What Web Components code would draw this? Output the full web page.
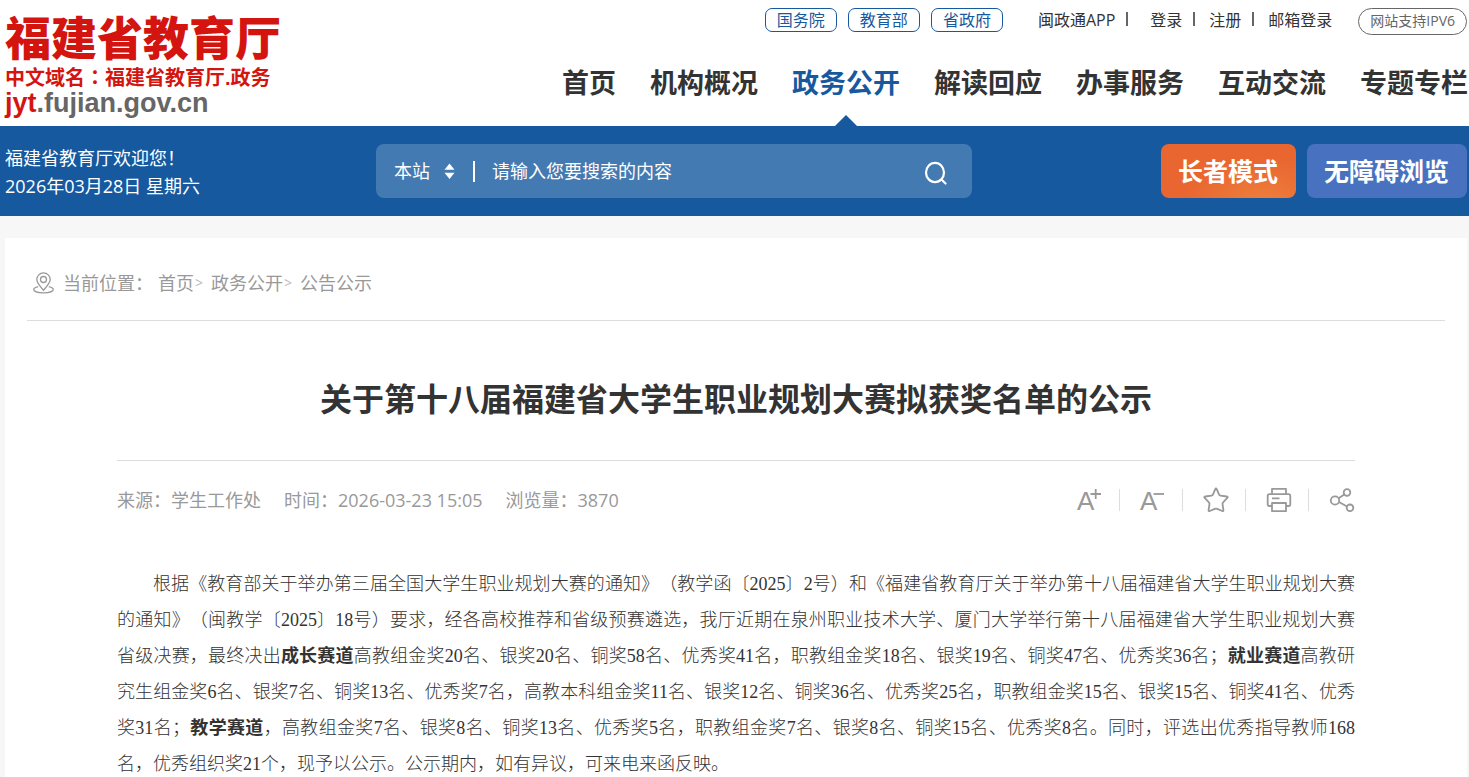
<!DOCTYPE html>
<html lang="zh-CN">
<head>
<meta charset="utf-8">
<meta name="viewport" content="width=device-width, initial-scale=1">
<title>关于第十八届福建省大学生职业规划大赛拟获奖名单的公示</title>
<style>
  :root {
    --color-brand: #16599f;
    --color-text: #333;
    --color-muted: #999;
    --color-line: #ddd;
    --font-ui: "Open Sans", "Noto Sans CJK SC", sans-serif;
    --font-article: "Liberation Serif", "Noto Sans CJK SC", serif;
  }
  body {
    margin: 0;
    background: #f7f7f7;
    color: var(--color-text);
    font-family: var(--font-ui);
    text-spacing-trim: space-all;
  }
</style>
</head>
<body>
<site-page></site-page>

<script>
function define(name, html) {
  const template = document.createElement('template')
  template.innerHTML = html

  customElements.define(name, class extends HTMLElement {
    constructor() {
      super()
      this.attachShadow({ mode: 'open' })
      this.shadowRoot.append(template.content.cloneNode(true))
    }
  })
}

define('site-logo', `
 <style>
  :host { display: block; white-space: nowrap; font-family: "Liberation Sans", "Noto Sans CJK SC", sans-serif; }
  a     { display: block; color: #d4150f; text-decoration: none; font-weight: 700; }
  span  { display: block; }
  .name   { font-size: 46px; line-height: 50px; font-weight: 900; }
  .domain { font-size: 20px; line-height: 26px; }
  .host   { font-size: 27px; line-height: 24px; color: #666; }
  b       { color: #d4150f; }
  i       { font-family: "Noto Sans CJK TC", sans-serif; font-style: normal; }
 </style>
 <a href="#">
  <span class="name">福建省教育厅</span>
  <span class="domain">中文域名<i lang="zh-TW">：</i>福建省教育厅.政务</span>
  <span class="host"><b>jyt</b>.fujian.gov.cn</span>
 </a>
`)

define('top-links', `
 <style>
  :host { display: flex; align-items: flex-start; justify-content: flex-end; font-size: 16px; line-height: 22px; white-space: nowrap; }
  a     { color: inherit; text-decoration: none; }
  .org  { display: flex; gap: 11px; margin-right: 35px; }
  .org a {
    padding: 0 11px;
    border: 1px solid var(--color-brand);
    border-radius: 7px;
    color: var(--color-brand);
  }
  .user { display: flex; align-items: center; line-height: 24px; }
  .user a + a::before {
    content: "";
    display: inline-block;
    width: 2px;
    height: 14px;
    margin: 0 14px 0 11px;
    background: #666;
  }
  .user a:nth-child(2)::before { margin-right: 22px; }
  .ipv6 {
    margin-left: 26px;
    padding: 0 11px 2px;
    border: 1px solid #666;
    border-radius: 14px;
    color: #666;
    font-size: 14px;
    line-height: 23px;
  }
 </style>
 <div class="org"><a href="#">国务院</a><a href="#">教育部</a><a href="#">省政府</a></div>
 <div class="user"><a href="#">闽政通APP</a><a href="#">登录</a><a href="#">注册</a><a href="#">邮箱登录</a></div>
 <a class="ipv6" href="#">网站支持IPV6</a>
`)

define('nav-item', `
 <style>
  :host { display: block; position: relative; }
  a     { display: block; color: inherit; text-decoration: none; }
  :host([active]) { color: var(--color-brand); }
  :host([active])::after {
    content: "";
    position: absolute;
    bottom: 0;
    left: calc(50% - 11px);
    border: solid transparent;
    border-width: 0 11px 11px;
    border-bottom-color: var(--color-brand);
  }
 </style>
 <a href="#"><slot></slot></a>
`)

define('main-nav', `
 <style>
  :host { display: block; }
  nav   { display: flex; justify-content: flex-end; gap: 34px; font-size: 27px; font-weight: 700; line-height: 40px; white-space: nowrap; }
  nav-item { padding: 28px 0 23px; }
 </style>
 <nav>
  <nav-item>首页</nav-item>
  <nav-item>机构概况</nav-item>
  <nav-item active>政务公开</nav-item>
  <nav-item>解读回应</nav-item>
  <nav-item>办事服务</nav-item>
  <nav-item>互动交流</nav-item>
  <nav-item>专题专栏</nav-item>
 </nav>
`)

define('site-header', `
 <style>
  :host     { display: flex; justify-content: space-between; background: #fff; padding: 0 2px 0 5px; }
  site-logo { padding-top: 14px; }
  .menus    { display: flex; flex-direction: column; justify-content: flex-end; padding-top: 8px; }
  main-nav  { margin-right: -1px; }
 </style>
 <site-logo></site-logo>
 <div class="menus">
  <top-links></top-links>
  <main-nav></main-nav>
 </div>
`)

define('search-box', `
 <style>
  :host { display: block; }
  form {
    display: flex;
    align-items: center;
    height: 54px;
    padding: 0 18px;
    border-radius: 8px;
    background: rgba(255, 255, 255, .2);
  }
  select, input, button {
    appearance: none;
    margin: 0;
    padding: 0;
    border: 0;
    outline: 0;
    background: none;
    color: #fff;
    font: inherit;
    line-height: 28px;
  }
  select { width: 50px; }
  option { color: var(--color-text); }
  .line  { width: 2px; height: 21px; margin: 0 17px 0 18px; background: #fff; }
  input  { flex: 1; min-width: 0; }
  input::placeholder { color: #fff; opacity: 1; }
  button { display: flex; padding: 8px 6px 4px; cursor: pointer; }
 </style>
 <form onsubmit="return false">
  <select aria-label="搜索范围"><option>本站</option></select>
  <svg width="11" height="16" viewBox="0 0 11 16" fill="#fff"><path d="M5.500 0.500 10.500 6.800H.5zM5.500 16 10.500 9.700H.5z"/></svg>
  <span class="line"></span>
  <input type="text" aria-label="搜索" placeholder="请输入您要搜索的内容">
  <button aria-label="搜索">
   <svg width="24" height="24" viewBox="0 0 24 24" fill="none" stroke="#fff" stroke-width="2.200" stroke-linecap="round"><ellipse cx="11" cy="11.500" rx="9" ry="9.700"/><path d="m17.500 18.500 4 4"/></svg>
  </button>
 </form>
`)

define('mode-button', `
 <style>
  :host { display: block; }
  button {
    height: 54px;
    padding: 0 18px 0 17px;
    border: 0;
    border-radius: 8px;
    background: var(--mode-bg, #4872c0);
    color: #fff;
    font: 700 25px/54px var(--font-ui);
    white-space: nowrap;
    cursor: pointer;
  }
 </style>
 <button><slot></slot></button>
`)

define('site-banner', `
 <style>
  :host {
    display: grid;
    grid-template-columns: 371px minmax(0, 596px) 1fr;
    align-items: center;
    height: 90px;
    padding: 0 2px 0 5px;
    background: var(--color-brand);
    color: #fff;
    font-size: 18px;
    line-height: 28px;
  }
  p        { margin: 0; }
  .welcome { padding-top: 2px; }
  .modes   { display: flex; justify-content: flex-end; gap: 11px; }
  .elder   { --mode-bg: radial-gradient(ellipse at 75% 110%, #ed7f3c 0%, #e96631 55%); }
 </style>
 <div class="welcome">
  <p>福建省教育厅欢迎您！</p>
  <p>2026年03月28日 星期六</p>
 </div>
 <search-box></search-box>
 <div class="modes">
  <mode-button class="elder">长者模式</mode-button>
  <mode-button>无障碍浏览</mode-button>
 </div>
`)

define('bread-crumb', `
 <style>
  :host {
    display: block;
    padding: 30px 6px 22px;
    border-bottom: 1px solid var(--color-line);
    color: var(--color-muted);
    font-size: 18px;
    line-height: 30px;
  }
  nav   { display: flex; align-items: center; }
  svg   { margin-right: 9px; }
  a     { color: inherit; text-decoration: none; }
  .home { margin-left: 5px; }
  i     { width: 16px; padding-left: 1px; font-style: normal; font-size: 14px; color: #bbb; }
 </style>
 <nav>
  <svg width="21" height="22" viewBox="0 0 21 22" fill="none" stroke="#999" stroke-width="1.300"><path d="M10.500 18.300C7 14.300 3.800 11 3.800 7.600a6.700 6.700 0 0 1 13.400 0c0 3.400-3.200 6.700-6.700 10.700z"/><circle cx="10.500" cy="7.500" r="3"/><path d="M5.200 14.700C2.600 15.300.8 16.300.8 17.500c0 1.900 4.200 3.400 9.700 3.400s9.700-1.500 9.700-3.400c0-1.200-1.800-2.200-4.400-2.800"/></svg>
  <span>当前位置：</span>
  <a class="home" href="#">首页</a><i>&gt;</i>
  <a href="#">政务公开</a><i>&gt;</i>
  <a href="#">公告公示</a>
 </nav>
`)

define('article-tools', `
 <style>
  :host  { display: flex; align-items: center; }
  button {
    display: flex;
    width: 26px;
    height: 26px;
    padding: 0;
    border: 0;
    background: none;
    color: var(--color-muted);
    font: 26px/28px "Liberation Sans", sans-serif;
    cursor: pointer;
  }
  span { width: 1px; height: 22px; margin: 0 20px 0 16px; background: var(--color-line); }
  svg  { flex: none; fill: none; stroke: currentColor; stroke-width: 1.800; stroke-linejoin: round; }
  .sign { margin: 1px 0 0 -5px; }
 </style>
 <button aria-label="放大字号">A<svg class="sign" width="12" height="12"><path d="M1.500 6H12M6.700 1v10"/></svg></button>
 <span></span>
 <button aria-label="缩小字号">A<svg class="sign" width="12" height="12"><path d="M1.500 6H12"/></svg></button>
 <span></span>
 <button aria-label="收藏"><svg width="26" height="26" viewBox="0 0 26 26"><path d="M13 1.500Q13.400 1.500 13.700 2.200L16.100 7.600Q16.500 8.500 17.500 8.600L23.800 9.500Q25.300 9.800 24.300 10.900L20.100 15.300Q19.400 16 19.500 17L20.400 23Q20.500 24.500 19.200 24L14.200 21.900Q13 21.400 11.800 21.900L6.800 24Q5.500 24.500 5.600 23L6.500 17Q6.600 16 5.900 15.300L1.700 10.900Q.7 9.800 2.200 9.500L8.500 8.600Q9.500 8.500 9.900 7.600L12.300 2.200Q12.600 1.500 13 1.500z"/></svg></button>
 <span></span>
 <button aria-label="打印"><svg width="26" height="26" viewBox="0 0 26 26"><path d="M6 7V1.800h14V7M6 19H3.500Q1.700 19 1.700 17.200V9Q1.700 7.200 3.500 7.200h19Q24.300 7.200 24.300 9v8.200Q24.300 19 22.500 19H20M6 16h14v8.200H6zM6 11.300h7.500"/></svg></button>
 <span></span>
 <button aria-label="分享"><svg width="26" height="26" viewBox="0 0 26 26"><circle cx="6" cy="13.500" r="4.200"/><circle cx="18" cy="5.500" r="3.300"/><circle cx="21" cy="20.800" r="3.300"/><path d="m9.600 11.200 5.700-3.800M10 15l8 4.500"/></svg></button>
`)

define('article-meta', `
 <style>
  :host {
    display: flex;
    justify-content: space-between;
    align-items: center;
    padding: 26px 0;
    border-top: 1px solid var(--color-line);
    color: var(--color-muted);
    font-size: 18px;
    line-height: 26px;
  }
  div { display: flex; gap: 23px; white-space: nowrap; }
 </style>
 <div>
  <span>来源：学生工作处</span>
  <span>时间：2026-03-23 15:05</span>
  <span>浏览量：3870</span>
 </div>
 <article-tools></article-tools>
`)

define('notice-article', `
 <style>
  :host { display: block; margin: 0 90px; }
  h1 {
    margin: 0;
    padding: 53px 0 37px;
    font-size: 32px;
    font-weight: 700;
    line-height: 49px;
    text-align: center;
  }
  .body {
    padding: 27px 0;
    font-family: var(--font-article);
    font-size: 18px;
    font-weight: 300;
    line-height: 36px;
    text-align: justify;
  }
  ::slotted(p) { margin: 0; text-indent: 2em; }
 </style>
 <h1><slot name="title"></slot></h1>
 <article-meta></article-meta>
 <div class="body"><slot></slot></div>
`)

define('site-page', `
 <style>
  :host  { display: block; }
  main   { margin: 22px 2px 0 5px; padding: 0 22px; background: #fff; }
  strong { font-weight: 700; }
 </style>
 <site-header></site-header>
 <site-banner></site-banner>
 <main>
  <bread-crumb></bread-crumb>
  <notice-article>
   <span slot="title">关于第十八届福建省大学生职业规划大赛拟获奖名单的公示</span>
   <p>根据《教育部关于举办第三届全国大学生职业规划大赛的通知》（教学函〔2025〕2号）和《福建省教育厅关于举办第十八届福建省大学生职业规划大赛的通知》（闽教学〔2025〕18号）要求，经各高校推荐和省级预赛遴选，我厅近期在泉州职业技术大学、厦门大学举行第十八届福建省大学生职业规划大赛省级决赛，最终决出<strong>成长赛道</strong>高教组金奖20名、银奖20名、铜奖58名、优秀奖41名，职教组金奖18名、银奖19名、铜奖47名、优秀奖36名；<strong>就业赛道</strong>高教研究生组金奖6名、银奖7名、铜奖13名、优秀奖7名，高教本科组金奖11名、银奖12名、铜奖36名、优秀奖25名，职教组金奖15名、银奖15名、铜奖41名、优秀奖31名；<strong>教学赛道</strong>，高教组金奖7名、银奖8名、铜奖13名、优秀奖5名，职教组金奖7名、银奖8名、铜奖15名、优秀奖8名。同时，评选出优秀指导教师168名，优秀组织奖21个，现予以公示。公示期内，如有异议，可来电来函反映。</p>
  </notice-article>
 </main>
`)
</script>
</body>
</html>
